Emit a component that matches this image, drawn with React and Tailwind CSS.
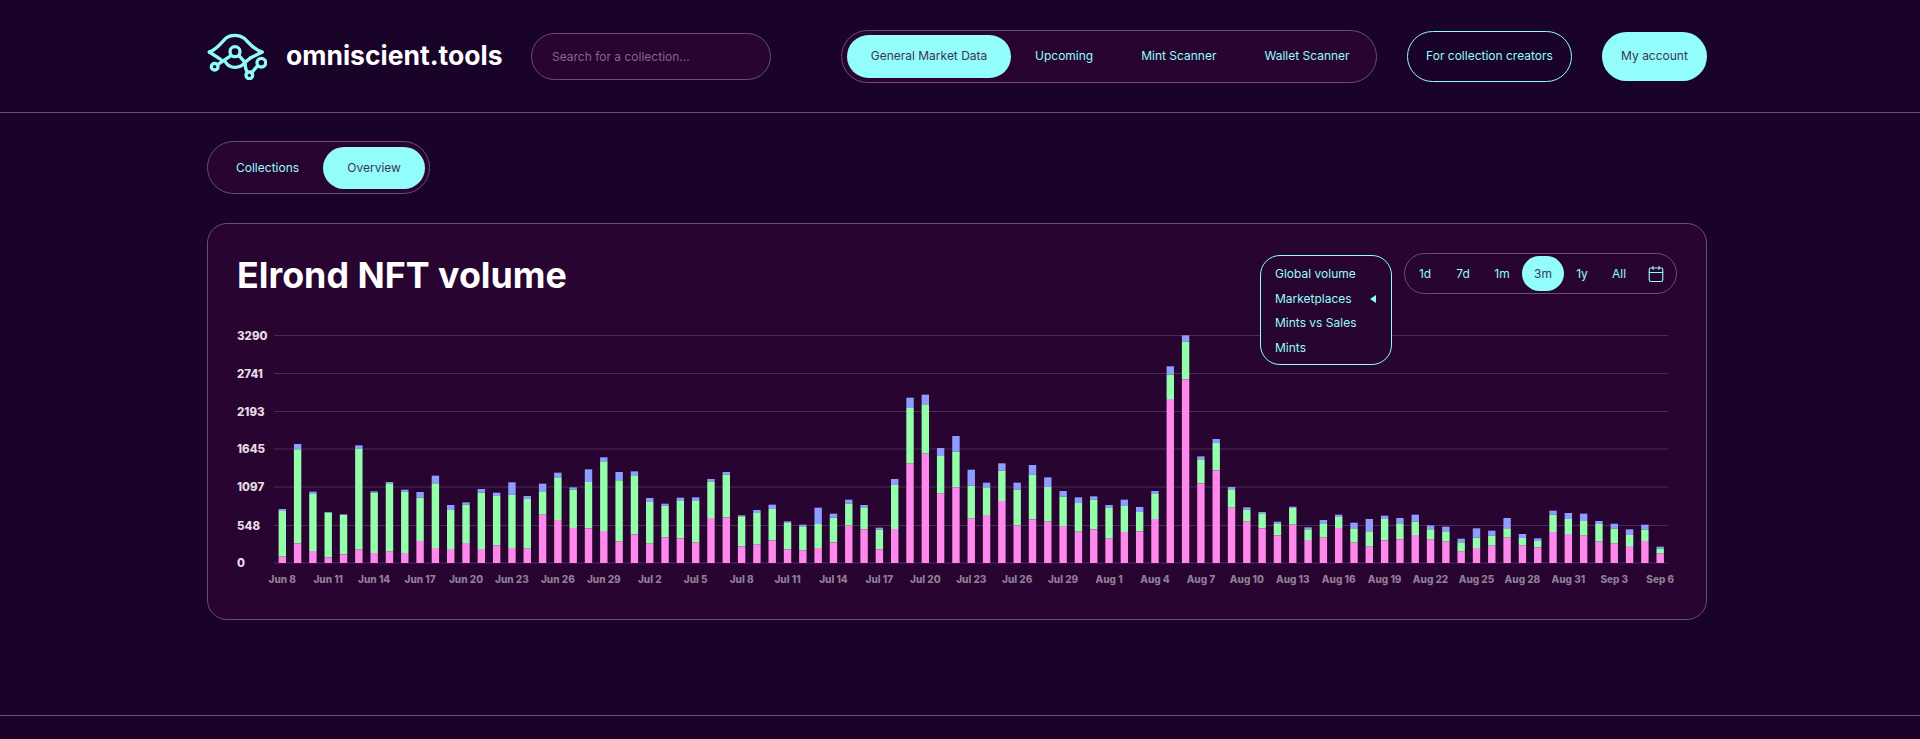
import { Calendar } from "lucide-react";

const font = { fontFamily: "Inter, 'Liberation Sans', sans-serif" };

const groups = [
  [729, [[710,573,567],[670,388,372],[693,522,515],[712,578,576],[703,585,583],[689,387,376],[699,518,514],[695,490,486],[699,515,509],[663,533,516],[684,490,467],[687,570,555],[669,554,547],[687,518,507],[676,528,518],[684,524,487],[686,537,528],[584,514,491],[600,474,458],[624,509,502],[625,486,448]]],
  [548, [[452,243,231],[484,300,275],[462,285,273],[490,365,353],[471,376,370],[474,362,352],[487,362,351],[413,304,296],[411,283,275],[498,408,405],[493,398,389],[480,386,373],[507,428,423],[510,438,433],[503,431,382],[486,412,400],[436,370,358],[447,381,374],[507,448,442],[446,314,296],[250,83,52],[220,72,43],[340,227,203],[321,214,167],[415,316,268],[404,321,307]]],
  [729, [[543,452,430],[616,509,488],[598,464,435],[605,501,472],[618,530,513],[635,549,532],[628,539,529],[656,564,555],[636,558,539],[634,576,561],[597,522,513],[237,164,139],[178,65,46],[490,418,409],[451,369,357],[563,508,501],[605,569,562],[625,580,576]]],
  [338, [[255,219,214],[223,173,169],[269,237,231],[262,219,209],[233,200,193],[277,234,217],[289,243,206],[270,206,196],[267,219,203],[254,214,193],[268,237,225],[274,243,229],[304,276,265],[293,262,234],[286,256,241],[262,234,203],[286,263,251],[291,272,264],[245,193,181],[251,206,188],[256,212,190],[274,221,212],[280,235,220],[287,254,237],[272,238,223],[310,295,289]]],
];
const bars = groups.flatMap(([base, rows]) => rows.map((r) => r.map((y) => (base - y) / 3)));

const yLabels = [["3290", 335.5], ["2741", 373.5], ["2193", 411.5], ["1645", 449], ["1097", 487], ["548", 525.5], ["0", 563]];
const xLabels = ["Jun 8","Jun 11","Jun 14","Jun 17","Jun 20","Jun 23","Jun 26","Jun 29","Jul 2","Jul 5","Jul 8","Jul 11","Jul 14","Jul 17","Jul 20","Jul 23","Jul 26","Jul 29","Aug 1","Aug 4","Aug 7","Aug 10","Aug 13","Aug 16","Aug 19","Aug 22","Aug 25","Aug 28","Aug 31","Sep 3","Sep 6"];

const BASE = 563;
const cx = (i) => 282.3 + i * 15.31;

function Logo() {
  return (
    <svg width="60" height="47" viewBox="20 36 180 141" fill="none" stroke="#8ffcf6" strokeWidth="10" strokeLinecap="round" strokeLinejoin="round" className="shrink-0">
      <path d="M27 93C50 85 62 66 76 52C90 40 116 40 132 52C148 68 160 86 186 93L150 111" />
      <path d="M27 93L62 116" />
      <circle cx="104" cy="92" r="15" />
      <circle cx="43" cy="137" r="10" />
      <circle cx="183" cy="125" r="13" />
      <circle cx="147" cy="163" r="10" />
      <path d="M52 131L92 104" />
      <path d="M76 124C88 142 118 146 134 124L116 104" />
      <path d="M154 155L172 134" />
      <path d="M140 154C136 146 134 136 134 124L150 111" />
    </svg>
  );
}

function Chart() {
  return (
    <svg viewBox="237 325 1440 270" width="1440" height="270" className="block mt-[31px]">
      {yLabels.map(([t, y]) => (
        <g key={t}>
          <line x1="274" x2="1668" y1={y} y2={y} stroke="#4b2b56" strokeWidth="1" />
          <text x="237" y={y + 4} fontSize="11.5" fontWeight="800" fill="#e3dce6" style={font}>{t}</text>
        </g>
      ))}
      {bars.map(([p, g, b], i) => (
        <g key={i}>
          <rect x={cx(i) - 3.7} y={BASE - b} width="7.4" height={b - g} fill="#8e9dff" />
          <rect x={cx(i) - 3.7} y={BASE - g} width="7.4" height={g - p} fill="#94ffaa" />
          <rect x={cx(i) - 3.7} y={BASE - p} width="7.4" height={p} fill="#ff88ec" />
        </g>
      ))}
      {xLabels.map((t, i) => (
        <text key={t} x={cx(i * 3)} y="583" textAnchor="middle" fontSize="10" fontWeight="800" fill="#8f7e98" style={font}>{t}</text>
      ))}
    </svg>
  );
}

const ranges = [["1d", "w-[38px]"], ["7d", "w-[38px]"], ["1m", "w-[40px]"], ["3m", "w-[42px]"], ["1y", "w-[36px]"], ["All", "w-[38px]"]];

export default function App() {
  return (
    <div style={font} className="min-h-screen bg-[#1a0328] text-[12px] text-[#93fdfb] flex flex-col">
      <header className="h-[113px] border-b border-[#6c4a85] pl-[207px] flex items-center">
        <div className="w-[1500px] flex items-center">
          <Logo />
          <span className="ml-[19px] text-[26.5px] font-bold text-white whitespace-nowrap w-[216px]">omniscient.tools</span>
          <input
            placeholder="Search for a collection..."
            className="ml-[29px] w-[240px] h-[47px] rounded-full border border-[#6c4a85] bg-[#280430] px-5 text-[12px] outline-none placeholder:text-[#7d6a88]"
          />
          <nav className="ml-auto w-[536px] h-[53px] flex items-center rounded-full border border-[#6c4a85] bg-[#280430] pl-[5px]">
            <span className="h-[43px] w-[164px] flex items-center justify-center rounded-full bg-[#93fdfb] text-[#3c3558] whitespace-nowrap">General Market Data</span>
            <span className="px-6 whitespace-nowrap">Upcoming</span>
            <span className="px-6 whitespace-nowrap">Mint Scanner</span>
            <span className="px-6 whitespace-nowrap">Wallet Scanner</span>
          </nav>
          <span className="ml-[30px] w-[165px] h-[51px] flex items-center justify-center rounded-full border border-[#93fdfb] whitespace-nowrap">For collection creators</span>
          <span className="ml-[30px] w-[105px] h-[49px] flex items-center justify-center rounded-full bg-[#93fdfb] text-[#3c3558] whitespace-nowrap">My account</span>
        </div>
      </header>

      <main className="ml-[207px] w-[1500px] flex-1">
        <div className="mt-[28px] w-[223px] h-[53px] flex items-center rounded-full border border-[#6c4a85] bg-[#280430] pl-[4px]">
          <span className="px-6 whitespace-nowrap">Collections</span>
          <span className="h-[42px] w-[102px] flex items-center justify-center rounded-full bg-[#93fdfb] text-[#3c3558]">Overview</span>
        </div>

        <section className="relative mt-[29px] h-[397px] rounded-[20px] border border-[#6c4a85] bg-[#280430] pl-[29px] pr-[29px] pt-[29px]">
          <div className="flex items-center justify-between h-[41px]">
            <h1 className="text-[35.8px] font-bold text-white leading-none mt-[4px]">Elrond NFT volume</h1>
            <div className="w-[273px] h-[41px] flex items-center rounded-full border border-[#6c4a85] pl-[1px]">
              {ranges.map(([t, w]) =>
                t === "3m" ? (
                  <span key={t} className={`${w} h-[35px] flex items-center justify-center rounded-full bg-[#93fdfb] text-[#3c3558]`}>{t}</span>
                ) : (
                  <span key={t} className={`${w} flex items-center justify-center`}>{t}</span>
                )
              )}
              <span className="w-[36px] flex items-center justify-center">
                <Calendar size={18} strokeWidth={1.5} />
              </span>
            </div>
          </div>

          <div className="absolute left-[1052px] top-[31px] w-[132px] h-[110px] rounded-[20px] border border-[#93fdfb] bg-[#280430] pl-[14px] pt-[6px] z-10">
            <div className="h-[24.6px] flex items-center">Global volume</div>
            <div className="h-[24.6px] flex items-center relative">
              Marketplaces
              <span className="absolute left-[95px] top-[8px] w-0 h-0 border-y-[4px] border-y-transparent border-r-[6px] border-r-[#93fdfb]" />
            </div>
            <div className="h-[24.6px] flex items-center">Mints vs Sales</div>
            <div className="h-[24.6px] flex items-center">Mints</div>
          </div>

          <Chart />
        </section>
      </main>

      <footer className="h-[24px] border-t border-[#6c4a85]" />
    </div>
  );
}
